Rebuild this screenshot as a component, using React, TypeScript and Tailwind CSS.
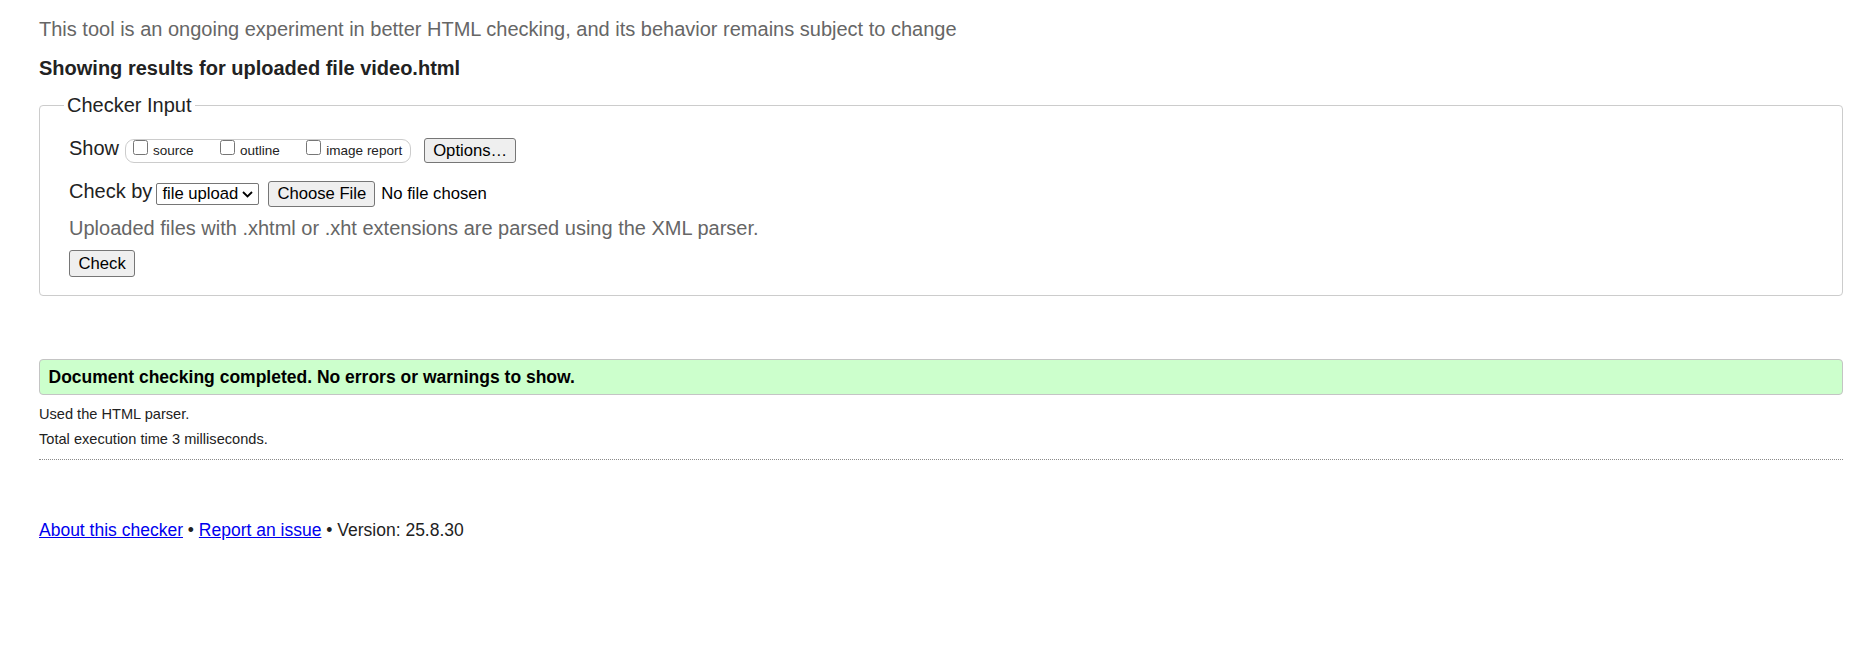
const btn =
  'inline-flex items-center justify-center rounded-[3px] border border-[#767676] bg-[#efefef] px-[7.5px] text-[16.67px] leading-[19px] text-black';

function Option({ label }: { label: string }) {
  return (
    <label className="flex items-center gap-[5.5px]">
      <input type="checkbox" className="m-0 mb-[7px] h-[15px] w-[15px]" />
      <span className="text-[13.5px] leading-[15px]">{label}</span>
    </label>
  );
}

export default function App() {
  return (
    <div className="min-h-screen bg-white pl-[39px] pr-[16px] pt-[18px] font-['Liberation_Sans',Arial,sans-serif] text-[#222]">
      <p className="text-[20px] leading-[23px] text-[#666]">
        This tool is an ongoing experiment in better HTML checking, and its behavior remains subject to change
      </p>
      <p className="mt-[16px] text-[20px] font-bold leading-[23px]">Showing results for uploaded file video.html</p>

      <fieldset className="mt-[14px] rounded-[4px] border border-[#ccc] pb-[18.5px] pl-[24px] pr-[24px] pt-[21.3px]">
        <legend className="px-[3px] text-[20px] leading-[23px]">Checker Input</legend>
        <div className="pl-[5px]">
          <div className="flex h-[25px] items-center">
            <span className="mb-[4px] text-[20px] leading-[23px]">Show</span>
            <div className="ml-[5.5px] flex h-[24px] items-center gap-[26px] rounded-[9px] border border-[#ccc] pl-[7px] pr-[8px]">
              <Option label="source" />
              <Option label="outline" />
              <Option label="image report" />
            </div>
            <button className={`${btn} ml-[13px] h-[25px] px-[8px]`}>Options…</button>
          </div>

          <div className="mt-[17.7px] flex h-[26px] items-center">
            <span className="mb-[4px] text-[20px] leading-[23px]">Check by</span>
            <div className="relative ml-[4px] flex items-center">
              <select className="h-[22px] w-[103px] appearance-none rounded-[2px] border border-[#767676] bg-white pl-[5px] pr-[20px] text-[16.67px] leading-[19px] text-black">
                <option>file upload</option>
              </select>
              <svg
                className="pointer-events-none absolute right-[6px] top-[8px]"
                width="11"
                height="7"
                viewBox="0 0 11 7"
                fill="none"
              >
                <path d="M1 1l4.5 4.5L10 1" stroke="#000" strokeWidth="1.8" />
              </svg>
            </div>
            <button className={`${btn} ml-[9px] h-[26px] px-[8px]`}>Choose File</button>
            <span className="ml-[6px] text-[16.67px] leading-[19px] text-black">No file chosen</span>
          </div>

          <p className="mt-[9.6px] text-[20px] leading-[23px] text-[#666]">
            Uploaded files with .xhtml or .xht extensions are parsed using the XML parser.
          </p>
          <button className={`${btn} mt-[10.4px] h-[27px] px-[8.5px]`}>Check</button>
        </div>
      </fieldset>

      <div className="mt-[63px] flex h-[36px] items-center rounded-[4px] border border-[#c4c4c4] bg-[#ccffcc] pl-[8.5px]">
        <p className="text-[17.5px] font-bold leading-[20px] text-black">
          Document checking completed. No errors or warnings to show.
        </p>
      </div>

      <p className="mt-[11px] text-[14.6px] leading-[17px]">Used the HTML parser.</p>
      <p className="mt-[8px] text-[14.6px] leading-[17px]">Total execution time 3 milliseconds.</p>
      <hr className="mt-[10.5px] border-t border-dotted border-[#8a8a8a]" />

      <p className="mt-[59.6px] text-[17.5px] leading-[20px]">
        <a href="#" className="text-[#0000ee] underline">
          About this checker
        </a>{' '}
        •{' '}
        <a href="#" className="text-[#0000ee] underline">
          Report an issue
        </a>{' '}
        • Version: 25.8.30
      </p>
    </div>
  );
}
